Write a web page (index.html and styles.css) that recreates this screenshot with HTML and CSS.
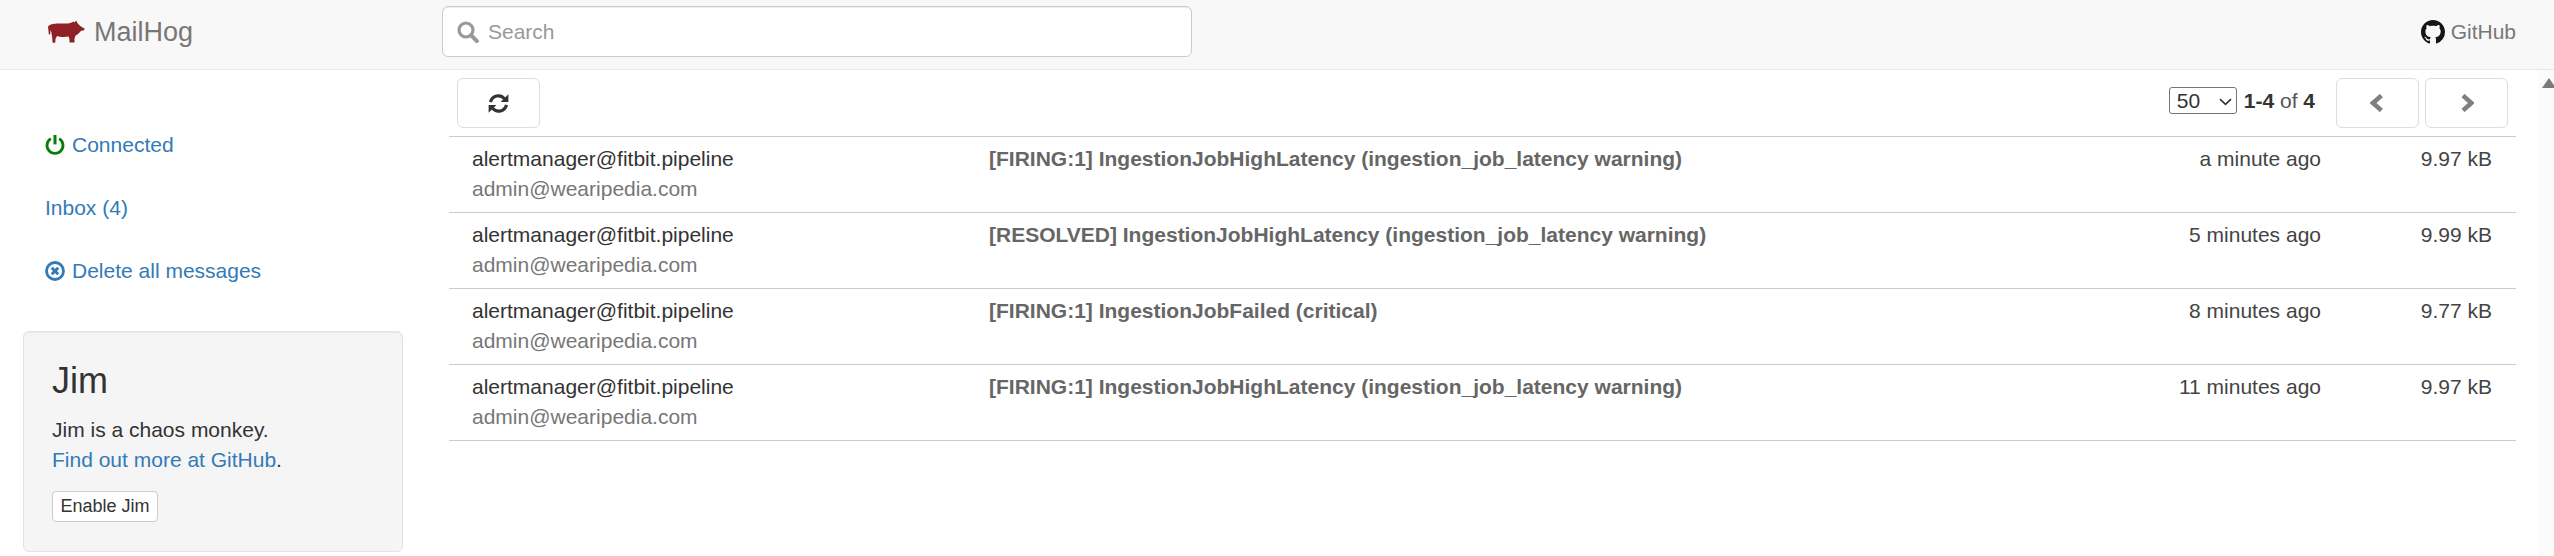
FILE: index.html
```html
<!DOCTYPE html>
<html>
<head>
<meta name="viewport" content="width=device-width, initial-scale=1">
<title>MailHog</title>
<link rel="stylesheet" href="styles.css">
</head>
<body>

<!-- Top bar -->
<div class="navbar">
  <a class="brand" href="#">
    <svg class="pig" viewBox="0 0 37 23"><path fill="#8f2126" d="M0 6.5 C1.5 4.5 4 4 7 3.8 C11 3.2 14 3.6 18 3.6 C21 3.6 23.5 2.8 25.5 1.4 L26.5 2.6 L28 0.6 L29.6 3.2 C31 5 33 6.6 36.8 8.8 L35.6 10.4 L33 10.8 C31.6 13 29.5 14.6 27.6 15.6 L26.4 19 L26.6 22.6 L21.4 22.6 L21.6 19.8 L20.6 16.6 C17 17.4 12 17.2 9.2 16 L7.6 18.6 L7.2 22.8 L4.6 22.8 L4.2 18 L3.4 12.6 L2.4 10 L2.2 14.6 L0.8 14.2 Z"/></svg>
    <span>MailHog</span>
  </a>
  <div class="search">
    <svg class="search-icon" viewBox="0 0 22 22"><circle cx="9" cy="9" r="7" fill="none" stroke="#999" stroke-width="3.2"/><path d="M14 14.2 L19.8 20" stroke="#999" stroke-width="4" stroke-linecap="round"/></svg>
    <span>Search</span>
  </div>
  <a class="github" href="#">
    <svg class="gh-icon" viewBox="0 0 16 16"><path fill="#161514" d="M8 0C3.58 0 0 3.58 0 8c0 3.54 2.29 6.53 5.47 7.59.4.07.55-.17.55-.38 0-.19-.01-.82-.01-1.49-2.01.37-2.53-.49-2.69-.94-.09-.23-.48-.94-.82-1.13-.28-.15-.68-.52-.01-.53.63-.01 1.08.58 1.23.82.72 1.21 1.87.87 2.33.66.07-.52.28-.87.51-1.07-1.78-.2-3.64-.89-3.64-3.95 0-.87.31-1.59.82-2.15-.08-.2-.36-1.02.08-2.12 0 0 .67-.21 2.2.82.64-.18 1.32-.27 2-.27.68 0 1.36.09 2 .27 1.53-1.04 2.2-.82 2.2-.82.44 1.1.16 1.92.08 2.12.51.56.82 1.27.82 2.15 0 3.07-1.87 3.75-3.65 3.95.29.25.54.73.54 1.48 0 1.07-.01 1.93-.01 2.2 0 .21.15.46.55.38A8.013 8.013 0 0016 8c0-4.42-3.58-8-8-8z"/></svg>
    <span>GitHub</span>
  </a>
</div>

<div class="page">

  <!-- Sidebar -->
  <div class="sidebar">
    <ul class="side-nav">
      <li>
        <a href="#">
          <svg class="side-icon" viewBox="0 0 20 20"><path d="M5.8 3.6 A8 8 0 1 0 14.2 3.6" fill="none" stroke="#087d08" stroke-width="2.8"/><path d="M10 0 V9.4" stroke="#087d08" stroke-width="3"/></svg>
          Connected
        </a>
      </li>
      <li><a href="#">Inbox (4)</a></li>
      <li>
        <a href="#">
          <svg class="side-icon" viewBox="0 0 20 20"><circle cx="10" cy="10" r="8.5" fill="none" stroke="#337ab7" stroke-width="2.8"/><path d="M6.8 6.8 L13.2 13.2 M13.2 6.8 L6.8 13.2" stroke="#337ab7" stroke-width="3"/></svg>
          Delete all messages
        </a>
      </li>
    </ul>

    <div class="well">
      <h3>Jim</h3>
      <p>Jim is a chaos monkey.<br><a href="#">Find out more at GitHub</a>.</p>
      <button class="btn-xs">Enable Jim</button>
    </div>
  </div>

  <!-- Message list -->
  <div class="content">
    <div class="toolbar">
      <button class="btn">
        <svg class="refresh" viewBox="0 0 20 20"><path d="M2.4 8.6 A7.6 7.6 0 0 1 15.6 5.4" fill="none" stroke="#333" stroke-width="3"/><path d="M12 8.6 H19.4 V1.2 Z" fill="#333"/><path d="M17.6 11.4 A7.6 7.6 0 0 1 4.4 14.6" fill="none" stroke="#333" stroke-width="3"/><path d="M8 11.4 H0.6 V18.8 Z" fill="#333"/></svg>
      </button>
      <div class="pager">
        <select class="per-page"><option>50</option></select>
        <span class="count"><b>1-4</b> of <b>4</b></span>
        <button class="btn">
          <svg class="chev" viewBox="0 0 15 18"><path d="M11.4 1.6 L3 9 L11.4 16.4" fill="none" stroke="#808080" stroke-width="4.6"/></svg>
        </button>
        <button class="btn">
          <svg class="chev" viewBox="0 0 15 18"><path d="M4 1.6 L12.4 9 L4 16.4" fill="none" stroke="#808080" stroke-width="4.6"/></svg>
        </button>
      </div>
    </div>

    <div class="messages">
      <div class="msg">
        <div class="addr">alertmanager@fitbit.pipeline<span>admin@wearipedia.com</span></div>
        <div class="subject">[FIRING:1] IngestionJobHighLatency (ingestion_job_latency warning)</div>
        <div class="time">a minute ago</div>
        <div class="size">9.97 kB</div>
      </div>
      <div class="msg">
        <div class="addr">alertmanager@fitbit.pipeline<span>admin@wearipedia.com</span></div>
        <div class="subject">[RESOLVED] IngestionJobHighLatency (ingestion_job_latency warning)</div>
        <div class="time">5 minutes ago</div>
        <div class="size">9.99 kB</div>
      </div>
      <div class="msg">
        <div class="addr">alertmanager@fitbit.pipeline<span>admin@wearipedia.com</span></div>
        <div class="subject">[FIRING:1] IngestionJobFailed (critical)</div>
        <div class="time">8 minutes ago</div>
        <div class="size">9.77 kB</div>
      </div>
      <div class="msg">
        <div class="addr">alertmanager@fitbit.pipeline<span>admin@wearipedia.com</span></div>
        <div class="subject">[FIRING:1] IngestionJobHighLatency (ingestion_job_latency warning)</div>
        <div class="time">11 minutes ago</div>
        <div class="size">9.97 kB</div>
      </div>
    </div>
  </div>

  <!-- Page scrollbar -->
  <div class="scrollbar"><div class="arrow-up"></div></div>
</div>

</body>
</html>
```

FILE: styles.css
```css
* {box-sizing: border-box;}

html, body {height: 100%;}

body {
  margin: 0;
  font-family: "Liberation Sans", Arial, sans-serif;
  font-size: 21px;
  line-height: 30px;
  color: #333;
  background: #fff;
  overflow: hidden;
}

a {color: #337ab7; text-decoration: none;}

/* Top bar */
.navbar {
  display: flex;
  align-items: flex-start;
  height: 70px;
  padding: 6px 38px 0 48px;
  background: #f8f8f8;
  border-bottom: 1px solid #e7e7e7;
}

.brand {
  display: flex;
  align-items: center;
  width: 394px;
  height: 51px;
  color: #777;
  font-size: 27px;
}

.pig {
  width: 37px;
  height: 23px;
  margin-right: 9px;
}

.search {
  display: flex;
  align-items: center;
  width: 750px;
  height: 51px;
  padding-left: 14px;
  color: #999;
  background: #fff;
  border: 1px solid #ccc;
  border-radius: 6px;
  box-shadow: inset 0 1px 1px rgba(0,0,0,.075);
}

.search-icon {
  width: 22px;
  height: 22px;
  margin-right: 9px;
}

.github {
  display: flex;
  align-items: center;
  height: 51px;
  margin-left: auto;
  color: #777;
}

.gh-icon {
  width: 24px;
  height: 24px;
  margin-right: 6px;
}

/* Page columns */
.page {
  display: flex;
  height: calc(100% - 70px);
}

.sidebar {
  width: 449px;
  flex: none;
  padding: 0 46px 0 23px;
}

.side-nav {
  list-style: none;
  margin: 0;
  padding: 60px 0 0 22px;
}

.side-nav li {
  height: 63px;
}

.side-nav a {
  display: flex;
  align-items: center;
}

.side-icon {
  width: 20px;
  height: 20px;
  margin-right: 7px;
}

.well {
  height: 221px;
  margin-top: 12px;
  padding: 28px;
  background: #f5f5f5;
  border: 1px solid #e3e3e3;
  border-radius: 6px;
  box-shadow: inset 0 1px 1px rgba(0,0,0,.05);
}

.well h3 {
  margin: 1px 0 14px;
  font-size: 36px;
  font-weight: 400;
  line-height: 40px;
}

.well p {
  margin: 0 0 16px;
}

.btn-xs {
  display: block;
  width: 106px;
  height: 31px;
  padding: 0;
  font: inherit;
  font-size: 18px;
  line-height: 27px;
  color: #333;
  background: #fff;
  border: 1px solid #ccc;
  border-radius: 4px;
}

/* Message list */
.content {
  flex: 1;
  min-width: 0;
}

.toolbar {
  display: flex;
  align-items: flex-start;
  height: 66px;
  padding: 8px 8px 0 8px;
}

.btn {
  display: flex;
  align-items: center;
  justify-content: center;
  width: 83px;
  height: 50px;
  padding: 0;
  background: #fff;
  border: 1px solid #ddd;
  border-radius: 6px;
}

.refresh {
  width: 21px;
  height: 21px;
}

.pager {
  display: flex;
  align-items: flex-start;
  gap: 6px;
  margin-left: auto;
}

.per-page {
  appearance: none;
  -webkit-appearance: none;
  width: 68px;
  height: 27px;
  margin-top: 9px;
  padding-left: 7px;
  font: inherit;
  line-height: 25px;
  color: #333;
  background: #fff url("data:image/svg+xml,%3Csvg xmlns='http://www.w3.org/2000/svg' width='13' height='8'%3E%3Cpath d='M1 1.2 L6.5 6.4 L12 1.2' fill='none' stroke='%23333' stroke-width='1.6'/%3E%3C/svg%3E") no-repeat 49px 10px;
  border: 1px solid #767676;
  border-radius: 3px;
}

.count {
  margin: 8px 15px 0 1px;
  color: #555;
}

.count b {color: #333;}

.chev {
  width: 15px;
  height: 18px;
}

.messages {border-top: 1px solid #ccc;}

.msg {
  display: grid;
  grid-template-columns: 517px 1fr auto 171px;
  height: 76px;
  padding: 7px 24px 0 23px;
  color: #444;
  border-bottom: 1px solid #ccc;
}

.addr {color: #333;}

.addr span {
  display: block;
  color: #777;
}

.subject {
  font-weight: 700;
  color: #666;
}

.time, .size {text-align: right;}

/* Page scrollbar */
.scrollbar {
  flex: none;
  width: 16px;
  margin-left: 22px;
  background: #fbfbfb;
  overflow: hidden;
}

.arrow-up {
  width: 0;
  margin: 8px 0 0 4px;
  border-left: 7px solid transparent;
  border-right: 7px solid transparent;
  border-bottom: 10px solid #7a7a7a;
}
```
